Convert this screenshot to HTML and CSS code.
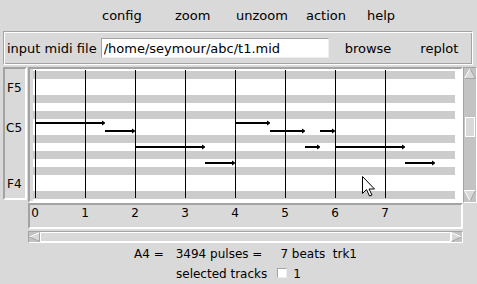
FILE: index.html
```html
<!DOCTYPE html>
<html lang="en">
<head>
    <meta charset="UTF-8">
    <title>midi explorer</title>
    <link rel="stylesheet" href="styles.css">
</head>
<body>
    <div class="menubar">
        <span class="menu">config</span>
        <span class="menu">zoom</span>
        <span class="menu">unzoom</span>
        <span class="menu">action</span>
        <span class="menu">help</span>
    </div>

    <div class="filebar">
        <label for="midifile">input midi file</label>
        <input type="text" id="midifile" value="/home/seymour/abc/t1.mid">
        <button class="btn btn-browse">browse</button>
        <button class="btn btn-replot">replot</button>
    </div>

    <div class="roll-area">
        <div class="keys">
            <svg width="20" height="129" viewBox="0 0 20 129">
                <text x="2" y="23">F5</text>
                <text x="1" y="63">C5</text>
                <text x="2" y="119">F4</text>
            </svg>
        </div>

        <div class="roll">
            <svg width="431" height="132" viewBox="0 0 431 132">
                <rect class="edge" x="0" y="0" width="3" height="132"/>
                <!-- black key rows -->
                <g class="stripes">
                    <rect x="3" y="2" width="422" height="8"/>
                    <rect x="3" y="26" width="422" height="8"/>
                    <rect x="3" y="42" width="422" height="8"/>
                    <rect x="3" y="66" width="422" height="8"/>
                    <rect x="3" y="82" width="422" height="8"/>
                    <rect x="3" y="98" width="422" height="8"/>
                    <rect x="3" y="122" width="422" height="8"/>
                </g>
                <!-- beat lines -->
                <g class="beats">
                    <line x1="5.5" y1="1" x2="5.5" y2="129"/>
                    <line x1="55.5" y1="1" x2="55.5" y2="129"/>
                    <line x1="105.5" y1="1" x2="105.5" y2="129"/>
                    <line x1="155.5" y1="1" x2="155.5" y2="129"/>
                    <line x1="205.5" y1="1" x2="205.5" y2="129"/>
                    <line x1="255.5" y1="1" x2="255.5" y2="129"/>
                    <line x1="305.5" y1="1" x2="305.5" y2="129"/>
                    <line x1="355.5" y1="1" x2="355.5" y2="129"/>
                </g>
                <!-- notes -->
                <g class="notes">
                    <path d="M5 53H72V51.5L75 53.5V54.5L72 56.5V55H5Z"/>
                    <path d="M75 61H102V59.5L105 61.5V62.5L102 64.5V63H75Z"/>
                    <path d="M105 77H172V75.5L175 77.5V78.5L172 80.5V79H105Z"/>
                    <path d="M175 93H202V91.5L205 93.5V94.5L202 96.5V95H175Z"/>
                    <path d="M205 53H237V51.5L240 53.5V54.5L237 56.5V55H205Z"/>
                    <path d="M240 61H272V59.5L275 61.5V62.5L272 64.5V63H240Z"/>
                    <path d="M275 77H287V75.5L290 77.5V78.5L287 80.5V79H275Z"/>
                    <path d="M290 61H302V59.5L305 61.5V62.5L302 64.5V63H290Z"/>
                    <path d="M305 77H372V75.5L375 77.5V78.5L372 80.5V79H305Z"/>
                    <path d="M375 93H402V91.5L405 93.5V94.5L402 96.5V95H375Z"/>
                </g>
                <!-- mouse pointer -->
                <path class="pointer" transform="translate(332.5 107.5)"
                      d="M0 0V17L4 13L7 19.5L9.5 18.5L6.5 12.5H12Z"/>
            </svg>
        </div>

        <div class="vscroll">
            <svg width="12" height="134" viewBox="0 0 12 134">
                <polygon class="arrow" points="6,0.5 0.5,10.5 11.5,10.5"/>
                <polyline class="lit" points="0.5,10.5 6,0.5"/>
                <polyline class="shade" points="6,0.5 11.5,10.5 0.5,10.5"/>
                <rect class="slider" x="1.5" y="49.5" width="9" height="19"/>
                <polygon class="arrow" points="0.5,122.5 11.5,122.5 6,133"/>
                <polyline class="lit" points="6,133 0.5,122.5 11.5,122.5"/>
                <polyline class="shade" points="11.5,122.5 6,133"/>
            </svg>
        </div>

        <div class="ruler">
            <svg width="431" height="22" viewBox="0 0 431 22">
                <text x="5" y="11.5">0</text>
                <text x="55" y="11.5">1</text>
                <text x="105" y="11.5">2</text>
                <text x="155" y="11.5">3</text>
                <text x="205" y="11.5">4</text>
                <text x="255" y="11.5">5</text>
                <text x="305" y="11.5">6</text>
                <text x="355" y="11.5">7</text>
            </svg>
        </div>

        <div class="hscroll">
            <svg width="433" height="10" viewBox="0 0 433 10">
                <rect class="slider" x="11.5" y="0.5" width="410" height="9"/>
                <polygon class="arrow" points="0.5,5 10.5,0.5 10.5,9.5"/>
                <polyline class="lit" points="10.5,0.5 0.5,5"/>
                <polyline class="shade" points="0.5,5 10.5,9.5 10.5,0.5"/>
                <polygon class="arrow" points="422.5,0.5 432.5,5 422.5,9.5"/>
                <polyline class="lit" points="422.5,9.5 422.5,0.5 432.5,5"/>
                <polyline class="shade" points="432.5,5 422.5,9.5"/>
            </svg>
        </div>
    </div>

    <div class="status">
        <div class="status-line line-pulses">
            <span>A4 =</span>
            <span class="pulses">3494 pulses =</span>
            <span class="beats-label">7 beats  trk1</span>
        </div>
        <div class="status-line line-tracks">
            <span>selected tracks</span>
            <span class="check"></span>
            <span class="track-no">1</span>
        </div>
    </div>
</body>
</html>
```

FILE: styles.css
```css
* {
    margin: 0;
    padding: 0;
    box-sizing: border-box;
}

body {
    font-family: 'DejaVu Sans', Verdana, sans-serif;
    font-size: 13px;
    color: #000;
    background: #d9d9d9;
    width: 477px;
    height: 284px;
    overflow: hidden;
}

/* top menu buttons */
.menubar {
    display: grid;
    grid-template-columns: 73px 61px 70px 61px auto;
    height: 31px;
    padding: 8px 0 0 102px;
    line-height: 15px;
}

/* file entry row, groove frame */
.filebar {
    display: flex;
    align-items: center;
    width: 470px;
    height: 34px;
    margin-left: 3px;
    padding-left: 3px;
    line-height: 15px;
    border: 1px solid;
    border-color: #a3a3a3 #fff #fff #a3a3a3;
    box-shadow: inset 1px 1px 0 #fff, inset -1px -1px 0 #a3a3a3;
}

.filebar input {
    width: 228px;
    height: 20px;
    margin-left: 4px;
    padding-left: 2px;
    font-family: inherit;
    font-size: 13px;
    background: #fff;
    border: 1px solid;
    border-color: #a3a3a3 #eee #eee #a3a3a3;
    outline: none;
}

.btn {
    font-family: inherit;
    font-size: 13px;
    line-height: 15px;
    background: none;
    border: none;
    color: #000;
}

.btn-browse {
    margin-left: 16px;
}

.btn-replot {
    margin-left: 29px;
}

/* piano roll with its scrollbars */
.roll-area {
    display: grid;
    grid-template-columns: 25px 435px 14px;
    grid-template-rows: 136px 26px 14px;
    margin: 2px 0 0 3px;
}

.keys {
    width: 24px;
    height: 133px;
    border: 2px solid;
    border-color: #a3a3a3 #fff #fff #a3a3a3;
}

.keys svg,
.ruler svg {
    display: block;
    font-family: 'DejaVu Sans', sans-serif;
    font-size: 12px;
}

.ruler text {
    text-anchor: middle;
}

.roll {
    border: 2px solid;
    border-color: #a3a3a3 #fff #fff #a3a3a3;
    background: #fff;
}

.roll svg,
.vscroll svg,
.hscroll svg {
    display: block;
}

.edge {
    fill: #d9d9d9;
}

.stripes {
    fill: #ccc;
}

.beats {
    stroke: #000;
    stroke-width: 1;
}

.notes {
    fill: #000;
}

.pointer {
    fill: #fff;
    stroke: #000;
    stroke-width: 1;
    stroke-linejoin: miter;
}

.vscroll {
    height: 136px;
    background: #c3c3c3;
    border: 1px solid;
    border-color: #a3a3a3 #fff #fff #a3a3a3;
}

.ruler {
    grid-column: 2;
    border: 2px solid;
    border-color: #a3a3a3 #fff #fff #a3a3a3;
}

.hscroll {
    grid-column: 2;
    height: 12px;
    margin-top: 2px;
    background: #c3c3c3;
    border: 1px solid;
    border-color: #a3a3a3 #fff #fff #a3a3a3;
}

.arrow,
.slider {
    fill: #d9d9d9;
}

.slider {
    stroke: #fff;
    stroke-width: 1;
}

.lit,
.shade {
    fill: none;
    stroke-width: 1;
}

.lit {
    stroke: #fff;
}

.shade {
    stroke: #a3a3a3;
}

/* status lines under the roll */
.status {
    margin-top: 1px;
    font-size: 12px;
}

.status-line {
    display: flex;
    align-items: baseline;
    height: 20px;
    line-height: 20px;
    white-space: pre;
}

.line-pulses {
    padding-left: 134px;
}

.pulses {
    margin-left: 12px;
}

.beats-label {
    margin-left: 18px;
}

.line-tracks {
    padding-left: 176px;
}

.check {
    display: inline-block;
    width: 10px;
    height: 10px;
    margin-left: 10px;
    background: #fff;
    border: 1px solid;
    border-color: #a3a3a3 #eee #eee #a3a3a3;
}

.track-no {
    margin-left: 6px;
}
```
